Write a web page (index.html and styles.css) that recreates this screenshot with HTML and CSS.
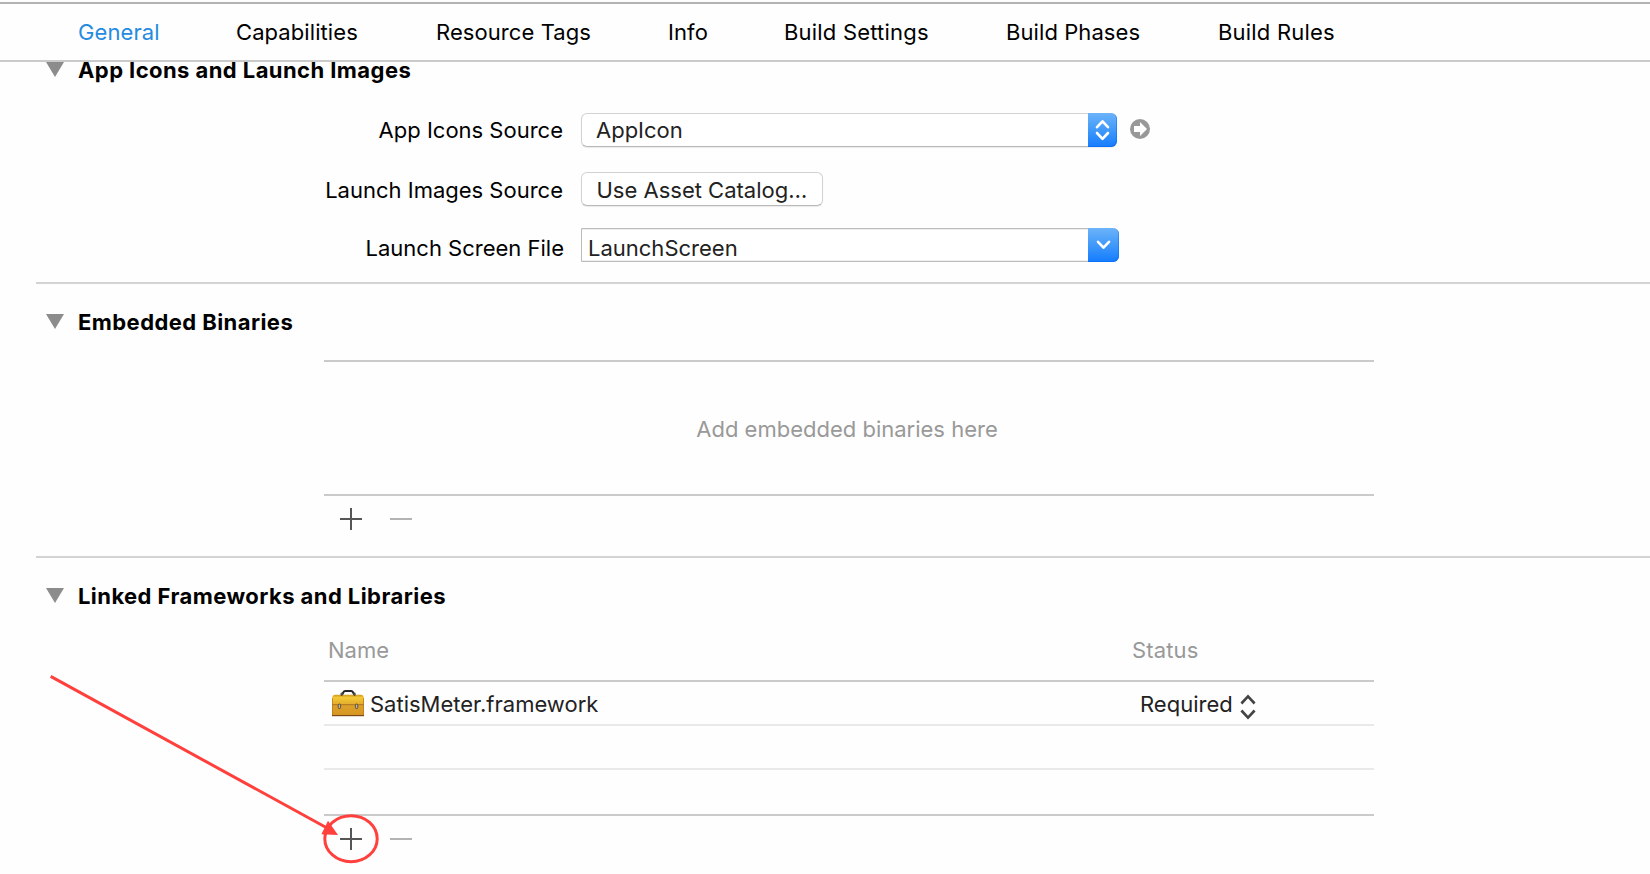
FILE: index.html
```html
<!DOCTYPE html>
<html lang="en">
<head>
<meta charset="utf-8">
<title>Target settings</title>
<link rel="stylesheet" href="styles.css">
</head>
<body>
<nav class="tabs">
  <a class="tab active">General</a>
  <a class="tab">Capabilities</a>
  <a class="tab">Resource Tags</a>
  <a class="tab">Info</a>
  <a class="tab wide">Build Settings</a>
  <a class="tab">Build Phases</a>
  <a class="tab wide">Build Rules</a>
</nav>
<main class="editor">
  <section class="section icons-section">
    <h2 class="heading"><svg class="disclosure" width="18" height="15" viewBox="0 0 18 15"><path d="M0 0H18L9 15Z"/></svg><span>App Icons and Launch Images</span></h2>
    <div class="form">
      <div class="row row-source">
        <label class="label">App Icons Source</label>
        <div class="popup">
          <span class="popup-value">AppIcon</span>
          <span class="cap"><svg width="29" height="34" viewBox="0 0 29 34"><path d="M9 14.2 14.5 8.3 20 14.2M9 20 14.5 25.9 20 20"/></svg></span>
        </div>
        <svg class="go" width="20" height="20" viewBox="0 0 20 20"><circle cx="10" cy="10" r="10"/><path d="M4 7H10V3L17 10 10 17V13H4Z"/></svg>
      </div>
      <div class="row row-launch">
        <label class="label">Launch Images Source</label>
        <button class="button"><span>Use Asset Catalog…</span></button>
      </div>
      <div class="row row-screen">
        <label class="label">Launch Screen File</label>
        <div class="combo">
          <span class="combo-value">LaunchScreen</span>
          <span class="cap combo-cap"><svg width="31" height="34" viewBox="0 0 31 34"><path d="M10 13.8 15.5 19.7 21 13.8"/></svg></span>
        </div>
      </div>
    </div>
  </section>
  <section class="section embedded-section">
    <h2 class="heading"><svg class="disclosure" width="18" height="15" viewBox="0 0 18 15"><path d="M0 0H18L9 15Z"/></svg><span>Embedded Binaries</span></h2>
    <div class="well"><span>Add embedded binaries here</span></div>
    <div class="actions">
      <svg class="plus" width="22" height="22" viewBox="0 0 22 22"><path d="M0 11H22M11 0V22"/></svg>
      <svg class="minus" width="22" height="22" viewBox="0 0 22 22"><path d="M0 11H22"/></svg>
    </div>
  </section>
  <section class="section linked-section">
    <h2 class="heading"><svg class="disclosure" width="18" height="15" viewBox="0 0 18 15"><path d="M0 0H18L9 15Z"/></svg><span>Linked Frameworks and Libraries</span></h2>
    <div class="table">
      <div class="thead"><span class="c-name">Name</span><span class="c-status">Status</span></div>
      <div class="tr">
        <span class="framework">
          <svg class="toolbox" width="32" height="29" viewBox="0 0 32 29">
            <defs>
              <linearGradient id="lid" x1="0" y1="0" x2="0" y2="1"><stop offset="0" stop-color="#cf991c"/><stop offset=".3" stop-color="#f3c935"/><stop offset="1" stop-color="#e3aa2b"/></linearGradient>
              <linearGradient id="box" x1="0" y1="0" x2="0" y2="1"><stop offset="0" stop-color="#dda22c"/><stop offset="1" stop-color="#d69421"/></linearGradient>
            </defs>
            <path d="M10 5 11.4 2.2Q12 1.1 13.2 1.1H19.2Q20.4 1.1 21 2.2L22.4 5" fill="none" stroke="#252525" stroke-width="2"/>
            <path d="M0 14.7V8.5Q0 4.7 3.5 4.7H28.5Q32 4.7 32 8.5V14.7Z" fill="url(#lid)"/>
            <path d="M0 14.7H32V26H0Z" fill="url(#box)"/>
            <path d="M0 14.7H32" stroke="#a8701a" stroke-width="1"/>
            <path d="M0 25.6H32" stroke="#7c4a12" stroke-width="1.2"/>
            <path d="M.4 8V25M31.6 8V25" stroke="#b57a18" stroke-width=".8"/>
            <path d="M9.6 3.6V5M22.6 3.6V5" stroke="#55504a" stroke-width="2.2" stroke-linecap="round"/>
            <rect x="6.2" y="14" width="2.4" height="4.6" rx="1.2" fill="#b5b2a8" stroke="#4c4020" stroke-width=".8"/>
            <rect x="23.4" y="14" width="2.4" height="4.6" rx="1.2" fill="#b5b2a8" stroke="#4c4020" stroke-width=".8"/>
          </svg>
          <span class="fw-name">SatisMeter.framework</span>
        </span>
        <span class="status"><span class="st-name">Required</span><svg class="updown" width="16" height="26" viewBox="0 0 16 26"><path d="M1.4 9.5 8 2.3 14.6 9.5M1.4 16.5 8 23.7 14.6 16.5"/></svg></span>
      </div>
      <div class="tr"></div>
      <div class="tr last"></div>
    </div>
    <div class="actions">
      <svg class="plus" width="22" height="22" viewBox="0 0 22 22"><path d="M0 11H22M11 0V22"/></svg>
      <svg class="minus" width="22" height="22" viewBox="0 0 22 22"><path d="M0 11H22"/></svg>
    </div>
  </section>
</main>
<svg class="callout" width="340" height="200" viewBox="45 670 340 200">
  <path class="stroke" d="M50.7 676.4 328 828.5"/>
  <ellipse class="stroke" cx="351" cy="838.7" rx="26.2" ry="23"/>
  <path class="tip" d="M338 835 321.4 834.2 328 820.8Z"/>
</svg>
</body>
</html>
```
FILE: styles.css
```css
* { box-sizing: border-box; }
body {
  margin: 0;
  width: 1650px;
  height: 874px;
  overflow: hidden;
  position: relative;
  background: #fefefe;
  color: #000;
  font: 400 22px/28px Inter, "Liberation Sans", sans-serif;
  white-space: nowrap;
}
svg { display: block; flex: none; }
.tabs {
  position: relative;
  z-index: 1;
  height: 60px;
  margin-top: 2px;
  padding: 14px 0 0 78px;
  background: #fefefe;
  border-top: 2px solid #b2b2b2;
  border-bottom: 2px solid #cacaca;
  display: grid;
  grid-template-columns: 158px 200px 232px 116px 222px 212px auto;
  letter-spacing: .08px;
}
.tab.active { color: #268be0; }
.tab.wide { letter-spacing: .2px; }
.section { border-bottom: 2px solid #d3d3d3; margin-left: 36px; }
.heading {
  margin: 0;
  font-size: 22px;
  font-weight: 700;
  line-height: 28px;
  letter-spacing: .43px;
  display: flex;
  padding-left: 10px;
}
.disclosure { margin: 6px 14px 0 0; fill: #8c8c8c; }

.icons-section { height: 228px; margin-top: -6px; }
.form { padding-top: 29px; }
.row { display: flex; }
.label { width: 527px; text-align: right; margin-right: 18px; padding-top: 3px; }
.row-source { height: 59px; }
.row-launch { height: 56px; }
.row-launch .label { padding-top: 4px; }
.row-screen .label { padding-top: 6px; width: 528px; margin-right: 17px; }
.popup, .button, .combo {
  height: 34px;
  background: #fff;
  color: #222;
  border: 1px solid #d2d2d2;
  border-bottom-color: #b8b8b8;
  border-radius: 6px;
  box-shadow: 0 1px 1px rgba(0, 0, 0, .08);
}
.popup { width: 536px; display: flex; justify-content: space-between; padding: 2px 0 0 14px; }
.cap {
  width: 29px;
  height: 34px;
  margin: -3px -1px -1px 0;
  border-radius: 0 6px 6px 0;
  background: linear-gradient(#6cb3fa, #4099fa 50%, #147cff);
  box-shadow: inset -1px -1px 0 rgba(0, 95, 235, .4);
}
.cap path { fill: none; stroke: #fff; stroke-width: 2.6; stroke-linecap: round; stroke-linejoin: round; }
.go { margin: 6px 0 0 13px; fill: #989898; }
.go path { fill: #fff; }
.button { width: 242px; padding: 3px 0 0 14.5px; font: inherit; line-height: 28px; text-align: left; display: flex; }
.combo {
  width: 538px;
  display: flex;
  justify-content: space-between;
  border: 1px solid #bcbcbc;
  border-radius: 0 6px 6px 0;
  padding: 5px 0 0 6px;
  box-shadow: inset 0 1px 0 #eee, inset 0 -1px 0 #eee;
}
.combo-cap { width: 31px; margin-top: -6px; }

.embedded-section { height: 274px; padding-top: 24px; }
.well {
  margin: 24px 0 0 288px;
  width: 1050px;
  height: 136px;
  border-top: 2px solid #cacaca;
  border-bottom: 2px solid #cacaca;
  color: #999;
  text-align: center;
  padding: 53px 4px 0 0;
}
.actions { display: flex; gap: 28px; padding: 12px 0 0 304px; }
.plus, .minus { fill: none; stroke: #565656; stroke-width: 2; }
.minus { stroke: #b3b3b3; }

.linked-section { padding-top: 24px; border: 0; }
.table { margin: 26px 0 0 288px; width: 1050px; }
.thead {
  height: 46px;
  display: grid;
  grid-template-columns: 804px 1fr;
  padding-left: 4px;
  color: #999;
  border-bottom: 2px solid #cacaca;
}
.c-status { letter-spacing: .15px; }
.tr {
  height: 44px;
  border-bottom: 2px solid #e9e9e9;
  display: grid;
  grid-template-columns: 816px 1fr;
  color: #222;
}
.tr.last { height: 46px; border-color: #cacaca; }
.framework { display: flex; padding: 8px 0 0 8px; }
.toolbox { margin: 0 6px 0 0; }
.status { display: flex; padding-top: 8px; }
.updown { margin: 4px 0 0 7px; fill: none; stroke: #444; stroke-width: 2.6; }

.callout { position: absolute; left: 45px; top: 670px; }
.callout .stroke { fill: none; stroke: #ff403c; stroke-width: 3; }
.callout .tip { fill: #ff403c; }
```
